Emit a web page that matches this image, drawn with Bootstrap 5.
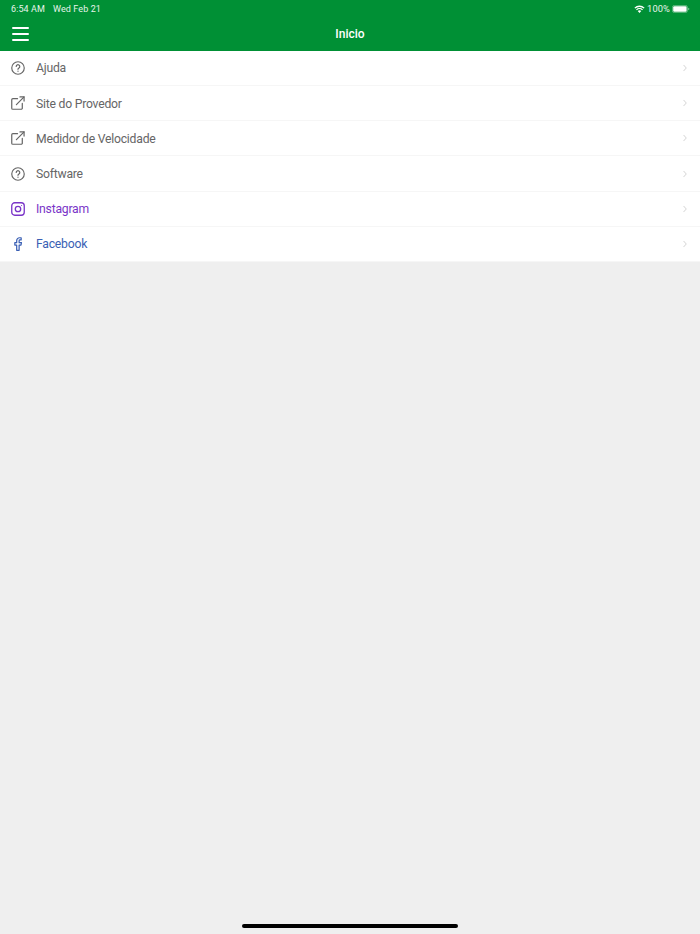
<!DOCTYPE html>
<html lang="pt">
<head>
    <meta charset="UTF-8">
    <meta name="viewport" content="width=device-width, initial-scale=1.0">
    <title>Inicio</title>
    <link href="https://cdn.jsdelivr.net/npm/bootstrap@5.3.0/dist/css/bootstrap.min.css" rel="stylesheet">
    <style>
        body {
            background-color: #efefef;
            font-family: "Roboto", "Liberation Sans", sans-serif;
            height: 934px;
            overflow: hidden;
        }
        .app-screen { height: 934px; }
        .app-header { background-color: #009035; color: #fff; height: 51px; }
        .status-bar { height: 16px; padding: 1px 10px 0 11px; font-size: 9px; line-height: 14px; color: #e6f4ea; letter-spacing: .1px; }
        .status-wifi { margin-right: 2px; }
        .status-level { font-size: 9.3px; margin-right: 2px; }
        .tool-bar { height: 35px; }
        .menu-btn { left: 12px; top: 11px; width: 17px; }
        .menu-btn span { display: block; height: 2px; background-color: #fff; margin-bottom: 4px; border-radius: 1px; }
        .page-title { font-size: 12px; font-weight: 500; margin-top: 1px; }
        .menu-list { --bs-list-group-border-radius: 0; --bs-list-group-bg: #fff; }
        .menu-row {
            height: 35.17px;
            padding: 0 13px 0 10.5px;
            font-size: 12.2px;
            letter-spacing: -.23px;
            color: #666;
            border-color: #f6f6f6;
        }
        .menu-row .row-label { padding-top: 1px; }
        .menu-row svg.row-icon { width: 14px; height: 14px; flex: none; margin-right: 11.5px; }
        .menu-row .chevron { width: 4px; height: 8px; margin-left: auto; }
        .tone-insta { color: #7a35c8; }
        .tone-face { color: #3a5fb4; }
        .home-bar { width: 216px; height: 4px; background-color: #000; border-radius: 2px; bottom: 6px; left: 242px; }
    </style>
</head>
<body>
    <div class="app-screen position-relative d-flex flex-column">
        <div class="app-header">
            <div class="status-bar d-flex align-items-center">
                <span>6:54 AM</span>
                <span class="ms-2">Wed Feb 21</span>
                <span class="ms-auto d-flex align-items-center">
                    <svg width="11" height="8" viewBox="0 0 11 8" class="status-wifi"><path d="M.4 2.7a7.3 7.3 0 0 1 10.2 0l-.9.9a6 6 0 0 0-8.4 0zM2 4.4a5 5 0 0 1 7 0l-.9.9a3.7 3.7 0 0 0-5.2 0zM3.7 6a2.6 2.6 0 0 1 3.6 0L5.5 7.9z" fill="#fff"/></svg>
                    <span class="status-level">100%</span>
                    <svg width="18" height="8" viewBox="0 0 18 8"><rect x=".4" y=".4" width="15" height="7.2" rx="2" fill="none" stroke="#fff" stroke-opacity=".45" stroke-width=".8"/><rect x="1.2" y="1.2" width="13.4" height="5.6" rx="1.2" fill="#fff"/><path d="M16.2 2.8c.8.2 1.2.6 1.2 1.2s-.4 1-1.2 1.2z" fill="#fff" fill-opacity=".5"/></svg>
                </span>
            </div>
            <div class="tool-bar position-relative d-flex align-items-center justify-content-center">
                <div class="menu-btn position-absolute"><span></span><span></span><span></span></div>
                <div class="page-title">Inicio</div>
            </div>
        </div>

        <div class="list-group menu-list">
            <div class="list-group-item menu-row d-flex align-items-center border-start-0 border-end-0 border-top-0">
                <svg class="row-icon" viewBox="0 0 15 15" fill="none" stroke="currentColor" stroke-width="1.25" stroke-linecap="round"><circle cx="7.5" cy="7.5" r="6.7"/><path d="M5.6 5.9a1.9 1.9 0 1 1 2.9 1.6c-.6.4-1 .7-1 1.4"/><path d="M7.5 10.8v.3"/></svg>
                <span class="row-label">Ajuda</span>
                <svg class="chevron" viewBox="0 0 5 9" fill="none" stroke="#d2d2d2" stroke-width="1.2"><path d="M.7.7l3.4 3.8L.7 8.3"/></svg>
            </div>
            <div class="list-group-item menu-row d-flex align-items-center border-start-0 border-end-0 border-top-0">
                <svg class="row-icon" viewBox="0 0 15 15" fill="none" stroke="currentColor" stroke-width="1.3" stroke-linecap="round" stroke-linejoin="round"><path d="M7 2.9H2a1.2 1.2 0 0 0-1.2 1.2V13A1.2 1.2 0 0 0 2 14.2h8.9a1.2 1.2 0 0 0 1.2-1.2V8"/><path d="M5.8 9.2L14 1"/><path d="M9.6 1H14v4.4"/></svg>
                <span class="row-label">Site do Provedor</span>
                <svg class="chevron" viewBox="0 0 5 9" fill="none" stroke="#d2d2d2" stroke-width="1.2"><path d="M.7.7l3.4 3.8L.7 8.3"/></svg>
            </div>
            <div class="list-group-item menu-row d-flex align-items-center border-start-0 border-end-0 border-top-0">
                <svg class="row-icon" viewBox="0 0 15 15" fill="none" stroke="currentColor" stroke-width="1.3" stroke-linecap="round" stroke-linejoin="round"><path d="M7 2.9H2a1.2 1.2 0 0 0-1.2 1.2V13A1.2 1.2 0 0 0 2 14.2h8.9a1.2 1.2 0 0 0 1.2-1.2V8"/><path d="M5.8 9.2L14 1"/><path d="M9.6 1H14v4.4"/></svg>
                <span class="row-label">Medidor de Velocidade</span>
                <svg class="chevron" viewBox="0 0 5 9" fill="none" stroke="#d2d2d2" stroke-width="1.2"><path d="M.7.7l3.4 3.8L.7 8.3"/></svg>
            </div>
            <div class="list-group-item menu-row d-flex align-items-center border-start-0 border-end-0 border-top-0">
                <svg class="row-icon" viewBox="0 0 15 15" fill="none" stroke="currentColor" stroke-width="1.25" stroke-linecap="round"><circle cx="7.5" cy="7.5" r="6.7"/><path d="M5.6 5.9a1.9 1.9 0 1 1 2.9 1.6c-.6.4-1 .7-1 1.4"/><path d="M7.5 10.8v.3"/></svg>
                <span class="row-label">Software</span>
                <svg class="chevron" viewBox="0 0 5 9" fill="none" stroke="#d2d2d2" stroke-width="1.2"><path d="M.7.7l3.4 3.8L.7 8.3"/></svg>
            </div>
            <div class="list-group-item menu-row d-flex align-items-center border-start-0 border-end-0 border-top-0 tone-insta">
                <svg class="row-icon" viewBox="0 0 15 15" fill="none" stroke="currentColor" stroke-width="1.4"><rect x=".8" y=".8" width="13.4" height="13.4" rx="3.2"/><circle cx="7.5" cy="7.5" r="2.9"/><circle cx="11.3" cy="3.7" r=".6" fill="currentColor" stroke="none"/></svg>
                <span class="row-label">Instagram</span>
                <svg class="chevron" viewBox="0 0 5 9" fill="none" stroke="#d2d2d2" stroke-width="1.2"><path d="M.7.7l3.4 3.8L.7 8.3"/></svg>
            </div>
            <div class="list-group-item menu-row d-flex align-items-center border-start-0 border-end-0 border-top-0 tone-face">
                <svg class="row-icon" viewBox="0 0 15 15" fill="none" stroke="currentColor" stroke-width="1.3" stroke-linejoin="round"><path d="M10.9.8H9.1A3 3 0 0 0 6.1 3.8v2.3H4.1v2.6h2v5.6h2.6V8.7h2l.5-2.6H8.7V4a.9.9 0 0 1 .9-.9h1.3z"/></svg>
                <span class="row-label">Facebook</span>
                <svg class="chevron" viewBox="0 0 5 9" fill="none" stroke="#d2d2d2" stroke-width="1.2"><path d="M.7.7l3.4 3.8L.7 8.3"/></svg>
            </div>
        </div>

        <div class="home-bar position-absolute"></div>
    </div>

    <script src="https://cdn.jsdelivr.net/npm/bootstrap@5.3.0/dist/js/bootstrap.bundle.min.js"></script>
</body>
</html>
